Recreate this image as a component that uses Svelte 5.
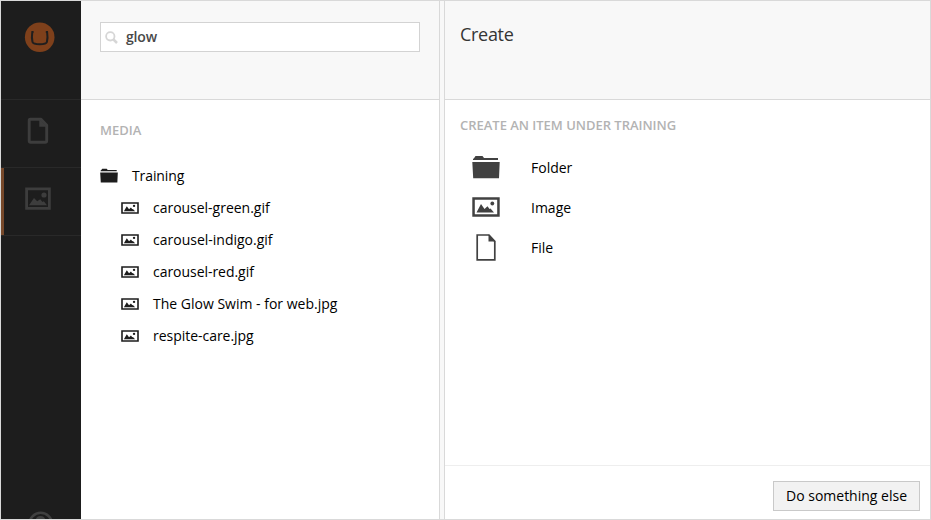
<script>
  const files = [
    { name: 'carousel-green.gif', spacing: -0.02 },
    { name: 'carousel-indigo.gif', spacing: 0 },
    { name: 'carousel-red.gif', spacing: -0.04 },
    { name: 'The Glow Swim - for web.jpg', spacing: 0 },
    { name: 'respite-care.jpg', spacing: -0.03 }
  ];
  const kinds = ['Folder', 'Image', 'File'];
</script>

{#snippet folder(w, h)}
  <svg width={w} height={h} viewBox="0 0 28 24" preserveAspectRatio="none" fill="currentColor">
    <path d="M2 3.200L3.500 1H10.500L12 3H26V5H1V4ZM0.300 7H27.700L27 23.200H1.200Z" />
  </svg>
{/snippet}

{#snippet picture(w, h)}
  <svg width={w} height={h} viewBox="0 0 28 20" preserveAspectRatio="none" fill="currentColor">
    <path fill-rule="evenodd" d="M0.300 0.300H27.700V19.700H0.300ZM2.800 2.800V17.200H25.200V2.800Z" />
    <path d="M4.500 15.500L9 7L12.500 12L15.500 9.300L17.500 12L18.500 11.500L22 15.500Z" />
    <circle cx="20.300" cy="6.500" r="1.900" />
  </svg>
{/snippet}

<div class="app">
  <nav>
    <div class="logo">
      <svg width="31" height="31" viewBox="0 0 31 31">
        <circle cx="15.700" cy="15.200" r="14.800" fill="#7e401b" />
        <path d="M9.600 9.900H8.300C7.700 14 7.800 17.500 8.500 20C9 21.700 11 22.200 15.700 22.200S22.400 21.700 22.900 20C23.600 17.500 23.700 14 23.100 9.900H21.800" fill="none" stroke="#1f1e1e" stroke-width="2" />
      </svg>
    </div>
    <div class="section">
      <svg width="22" height="28" viewBox="0 0 22 28">
        <path d="M3.300 2.300H14L19.700 8.300V23.800Q19.700 25.300 18.200 25.300H3.700Q2.200 25.300 2.200 23.800V3.700Q2.200 2.300 3.300 2.300Z" fill="none" stroke="#3d3d3d" stroke-width="2.900" stroke-linejoin="round" />
        <path d="M12.300 2V9.700H20Z" fill="#3d3d3d" />
      </svg>
    </div>
    <div class="section active">
      <svg width="26" height="23" viewBox="0 0 26 23" fill="#3d3d3d">
        <path fill-rule="evenodd" d="M0.200 0.500H25.800V22.700H0.200ZM3 3.200V20H23V3.200Z" />
        <path d="M4 18.200L9 11L12.200 14.300L15.200 12.300L17.500 15L18.800 14.300L22 18.200Z" />
        <circle cx="19" cy="8" r="2.600" />
      </svg>
    </div>
    <div class="help">
      <svg width="26" height="26" viewBox="0 0 26 26">
        <circle cx="13.700" cy="13" r="11.200" fill="none" stroke="#404040" stroke-width="2.600" />
        <path d="M10 10.500Q10 6.500 13.500 6.500T17 10.500Q17 12 13.500 14V16" fill="none" stroke="#404040" stroke-width="2.800" />
      </svg>
    </div>
  </nav>

  <section class="media">
    <header>
      <div class="search">
        <svg width="13" height="13" viewBox="0 0 13 13" fill="none" stroke="#d6d6d6">
          <circle cx="5.300" cy="5.300" r="4.200" stroke-width="1.800" />
          <path d="M8.500 8.500L12 12" stroke-width="2.500" />
        </svg>
        <span>glow</span>
      </div>
    </header>
    <div class="tree">
      <h5>MEDIA</h5>
      <div class="row root"><i>{@render folder(18, 15)}</i><span>Training</span></div>
      {#each files as file}
        <div class="row child"><i>{@render picture(18, 12)}</i><span style="letter-spacing: {file.spacing}px">{file.name}</span></div>
      {/each}
    </div>
  </section>

  <section class="create">
    <header><h1>Create</h1></header>
    <div class="options">
      <h5>CREATE AN ITEM UNDER TRAINING</h5>
      {#each kinds as kind}
        <div class="option">
          <i>
            {#if kind === 'Folder'}
              {@render folder(28, 24)}
            {:else if kind === 'Image'}
              {@render picture(28, 20)}
            {:else}
              <svg width="20" height="27" viewBox="0 0 20 27">
                <path d="M1.200 1H13L18.800 7.300V25.800H1.200Z" fill="none" stroke="currentColor" stroke-width="1.700" />
                <path d="M12.500 0.500V7.500H19.500Z" fill="currentColor" />
              </svg>
            {/if}
          </i>
          <span>{kind}</span>
        </div>
      {/each}
    </div>
    <footer><button>Do something else</button></footer>
  </section>
</div>

<style>
  .app {
    box-sizing: border-box;
    width: 931px;
    height: 520px;
    border: 1px solid #d9d9d9;
    display: flex;
    overflow: hidden;
    background: #f8f8f8;
    color: #000;
    font: 14px/20px "Open Sans", sans-serif;
  }
  svg { display: block; flex: none; }
  nav {
    width: 80px;
    flex: none;
    background: #1d1d1d;
    display: flex;
    flex-direction: column;
  }
  .logo {
    box-sizing: border-box;
    height: 99px;
    flex: none;
    border-bottom: 1px solid #292929;
    padding: 21px 0 0 23px;
  }
  .section {
    box-sizing: border-box;
    height: 68px;
    flex: none;
    border-bottom: 1px solid #292929;
    padding: 17px 0 0 26px;
  }
  .section.active {
    padding: 19px 0 0 24px;
    box-shadow: inset 3px 0 #77492b;
  }
  .help { margin: auto 0 -18px 26px; }
  section {
    display: flex;
    flex-direction: column;
    background: #fff;
    box-sizing: border-box;
  }
  header {
    box-sizing: border-box;
    height: 99px;
    flex: none;
    background: #f8f8f8;
    border-bottom: 1px solid #d9d9d9;
  }
  .media { width: 359px; flex: none; border-right: 1px solid #d9d9d9; }
  .media header { padding: 21px 0 0 19px; }
  .search {
    box-sizing: border-box;
    width: 320px;
    height: 30px;
    border: 1px solid #d3d3d3;
    background: #fff;
    display: flex;
    align-items: center;
    padding-left: 4px;
    color: #484848;
    font-weight: 600;
  }
  .search span { margin-left: 8px; letter-spacing: -0.15px; }
  .search svg { margin-top: 1px; }
  h5 {
    margin: 0;
    font-size: 13px;
    line-height: 20px;
    font-weight: 600;
    color: #b3b3b3;
  }
  .tree { padding: 20px 0 0 19px; }
  .tree h5 { margin-bottom: 20px; }
  .row { height: 32px; display: flex; align-items: center; }
  .row i { width: 32px; color: #1d1d1d; }
  .row.root i { padding-bottom: 1px; }
  .row.root span { letter-spacing: -0.1px; }
  .row.child { padding-left: 21px; }
  .create { flex: 1; margin-left: 4px; border-left: 1px solid #d9d9d9; }
  h1 {
    margin: 0;
    padding: 20px 0 0 15px;
    font-size: 18px;
    line-height: 26px;
    font-weight: 400;
    letter-spacing: -0.3px;
    color: #343434;
  }
  .options { padding: 15px 0 0 15px; flex: 1; }
  .options h5 { margin-bottom: 13px; letter-spacing: -0.02px; }
  .option { height: 40px; display: flex; align-items: center; }
  .option i { width: 52px; margin-right: 19px; padding-bottom: 2px; display: flex; justify-content: center; color: #414141; }
  footer {
    box-sizing: border-box;
    height: 54px;
    flex: none;
    border-top: 1px solid #eee;
    display: flex;
    justify-content: flex-end;
    padding: 15px 10px 0 0;
  }
  button {
    box-sizing: border-box;
    width: 147px;
    height: 30px;
    border: 1px solid #c9c9c9;
    background: #f2f2f2;
    color: #000;
    font: 14px/20px "Open Sans", sans-serif;
    padding: 0;
    white-space: nowrap;
  }
</style>
